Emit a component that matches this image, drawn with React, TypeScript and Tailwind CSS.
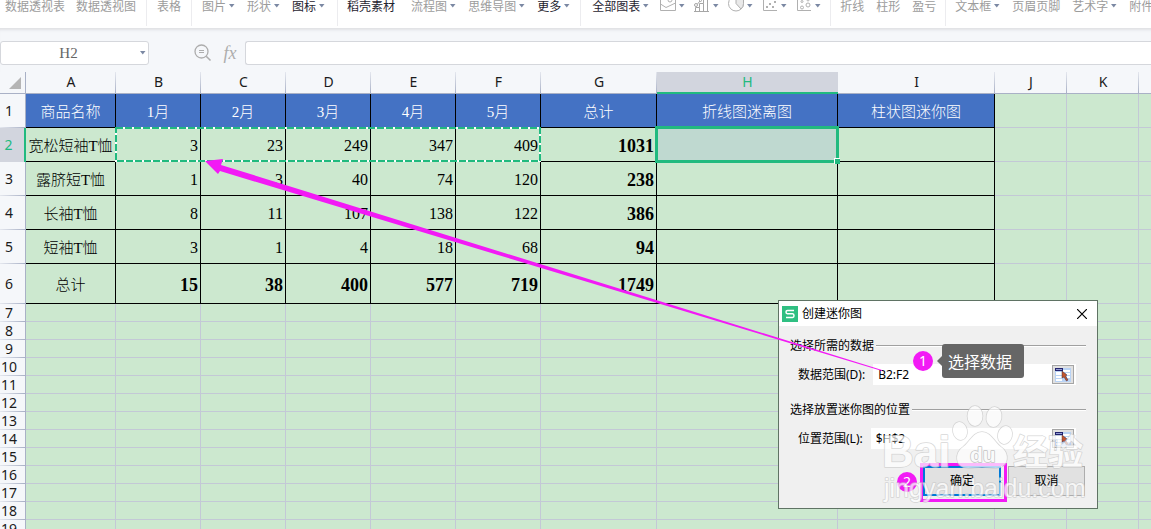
import React from 'react';

type RibbonEntry = {
    label?: string;
    icon?: React.ReactNode;
    menu?: boolean;
    active?: boolean;
    className?: string;
};

type RibbonGroupProps = {
    entries: RibbonEntry[];
    className: string;
};

const CaretIcon: React.FC = () => (
    <svg width="6" height="4" viewBox="0 0 6 4" className="flex-shrink-0" aria-hidden="true">
        <path d="M0 0H5.500L2.750 3.500Z" fill="#7b88a3" />
    </svg>
);

const AreaChartIcon: React.FC = () => (
    <svg width="16" height="12" viewBox="0 0 16 12" fill="none" stroke="#b0b0b0" aria-hidden="true">
        <path d="M.5 0V10.500H15.500V0" />
        <path d="M.5 4L6 7.500L15.500 3M8 0A2 2 0 0 0 12 0" />
    </svg>
);

const ComboChartIcon: React.FC = () => (
    <svg width="16" height="12" viewBox="0 0 16 12" fill="none" stroke="#a6a6a6" aria-hidden="true">
        <path d="M0 11.500H15M1.500 11V7.500H5.500V11M5.500 7.500V3.500H9.500V11M9.500 3.500V0M13.500 0V11" />
        <circle cx="2" cy="5" r="1.500" />
        <path d="M3.500 4L6 1" />
        <circle cx="6.500" cy=".5" r="1" />
    </svg>
);

const PieChartIcon: React.FC = () => (
    <svg width="16" height="12" viewBox="0 0 16 12" fill="none" stroke="#b0b0b0" aria-hidden="true">
        <circle cx="8" cy="3.500" r="7.500" />
        <path d="M8 -4V3.500L13 9A7.500 7.500 0 0 0 15.500 3.500V-4Z" fill="#e9e9e9" />
    </svg>
);

const ScatterIcon: React.FC = () => (
    <svg width="16" height="12" viewBox="0 0 16 12" fill="none" aria-hidden="true">
        <path d="M1.500 0V10.500H15" stroke="#b0b0b0" />
        <path d="M4 6h2v2H4zM7 3h2v2H7zM10 6h2v2h-2zM12 1h2v2h-2z" fill="#b0b0b0" />
    </svg>
);

const BubbleIcon: React.FC = () => (
    <svg width="16" height="12" viewBox="0 0 16 12" fill="none" stroke="#b0b0b0" aria-hidden="true">
        <path d="M1.500 0V10.500H15" />
        <circle cx="6" cy="7.500" r="1.500" />
        <circle cx="12" cy="5" r="2" />
        <circle cx="6" cy="1.500" r="1" />
        <circle cx="12" cy="0" r="1" />
    </svg>
);

const RibbonGroup: React.FC<RibbonGroupProps> = ({ entries, className }) => (
    <div className={`flex h-[26px] flex-shrink-0 items-start border-r border-[#ececef] ${className}`}>
        {entries.map((entry, index) => (
            <button
                key={entry.label ?? index}
                className={`flex items-center gap-[3px] whitespace-nowrap leading-3 ${entry.active ? 'text-[#1f2430]' : 'text-[#9c9c9c]'} ${entry.className ?? ''}`}
            >
                {entry.label ?? entry.icon}
                {entry.menu && <CaretIcon />}
            </button>
        ))}
    </div>
);

const ribbonGroups: RibbonGroupProps[] = [
    { className: 'gap-[11px] pl-[5px] pr-2.5', entries: [{ label: '数据透视表' }, { label: '数据透视图' }] },
    { className: 'px-2.5', entries: [{ label: '表格' }] },
    {
        className: 'gap-3 pl-2.5 pr-3',
        entries: [{ label: '图片', menu: true }, { label: '形状', menu: true }, { label: '图标', menu: true, active: true }],
    },
    {
        className: 'gap-3 pl-[9px] pr-2.5',
        entries: [
            { label: '稻壳素材', active: true, className: 'mr-1' },
            { label: '流程图', menu: true },
            { label: '思维导图', menu: true },
            { label: '更多', menu: true, active: true },
        ],
    },
    {
        className: 'gap-[9px] pl-[11px] pr-[9px]',
        entries: [
            { label: '全部图表', menu: true, active: true, className: 'mr-0.5' },
            { icon: <AreaChartIcon />, menu: true },
            { icon: <ComboChartIcon />, menu: true },
            { icon: <PieChartIcon />, menu: true },
            { icon: <ScatterIcon />, menu: true },
            { icon: <BubbleIcon />, menu: true },
        ],
    },
    { className: 'gap-3 px-[9px]', entries: [{ label: '折线' }, { label: '柱形' }, { label: '盈亏' }] },
    {
        className: 'gap-3 pl-[9px]',
        entries: [{ label: '文本框', menu: true }, { label: '页眉页脚' }, { label: '艺术字', menu: true }, { label: '附件' }],
    },
];

const FormulaBar: React.FC = () => (
    <div className="flex h-11 flex-shrink-0 items-center border-t border-[#e2e3e6] pt-1 shadow-[inset_0_3px_3px_-2px_#dfe0e4]">
        <div className="flex h-6 w-[149px] items-center rounded-[3px] border border-[#d5d7dc] bg-white pr-0.5">
            <input
                aria-label="名称框"
                defaultValue="H2"
                className="w-full min-w-0 bg-transparent pr-1 text-center font-['Liberation_Serif',serif] text-[15px] leading-5 text-[#666] outline-none"
            />
            <CaretIcon />
        </div>
        <button aria-label="查找" className="ml-[45px]">
            <svg width="18" height="18" viewBox="0 0 18 18" fill="none" stroke="#adadad" aria-hidden="true">
                <circle cx="7.500" cy="7.500" r="6.500" strokeWidth="1.300" />
                <path d="M5 6.500H10M5 8.500H10" />
                <path d="M12.200 12.200L16.500 16.500" strokeWidth="1.600" />
            </svg>
        </button>
        <button aria-label="插入函数" className="ml-2.5 w-4 font-['Liberation_Serif',serif] text-lg leading-5 italic text-[#adadad]">
            fx
        </button>
        <input aria-label="编辑栏" className="ml-[7px] h-6 min-w-0 flex-1 rounded-l-[3px] border border-r-0 border-[#d5d7dc] bg-white px-2 outline-none" />
    </div>
);

const columns = ['A', 'B', 'C', 'D', 'E', 'F', 'G', 'H', 'I', 'J', 'K', 'L'];
const lastDataColumn = 8;

const rows: string[][] = [
    ['商品名称', '1月', '2月', '3月', '4月', '5月', '总计', '折线图迷离图', '柱状图迷你图'],
    ['宽松短袖T恤', '3', '23', '249', '347', '409', '1031', '', ''],
    ['露脐短T恤', '1', '3', '40', '74', '120', '238', '', ''],
    ['长袖T恤', '8', '11', '107', '138', '122', '386', '', ''],
    ['短袖T恤', '3', '1', '4', '18', '68', '94', '', ''],
    ['总计', '15', '38', '400', '577', '719', '1749', '', ''],
];
const emptyRows = Array.from({ length: 13 }, (_, i) => i + 7);

const getCellClass = (row: number, col: number) => {
    if (col > lastDataColumn) return 'border-[#c3c8d6]';
    if (row === 0) return 'border-black bg-[#4472c4] text-center text-[15px] font-light text-white';
    if (col === 0) return 'border-black text-center text-[15px] font-light';
    if (col === 6 || row === 5) return 'border-black pr-0.5 text-right text-lg font-bold';
    return 'border-black pr-0.5 text-right text-base';
};

const getRowHeight = (row: number) => (row === 5 ? 'h-10' : 'h-[34px]');

const RowHeader: React.FC<{ row: number }> = ({ row }) => (
    <th
        scope="row"
        className={`bg-no-repeat pt-0 pr-[7px] pb-px pl-0 text-center font-['Noto_Sans',sans-serif] text-sm leading-4 font-normal ${row === 2
            ? 'border-r-2 border-[#21ba7f] bg-[#d2d5de] text-[#21ba7f]'
            : 'border-r border-[#a9b1c6] bg-[#f5f7fa] bg-[linear-gradient(to_right,#e4e7ee,#a9b1c6)] bg-size-[100%_1px] bg-bottom text-[#1b1b1b]'}`}
    >
        {row}
    </th>
);

// Dashed outline around the copied range B2:F2
const RangeOutline: React.FC = () => (
    <svg width="427" height="36" className="pointer-events-none absolute -top-px -left-px z-10 max-w-none" fill="none" strokeWidth="2" aria-hidden="true">
        <rect x="1" y="1" width="424" height="33" stroke="#fff" />
        <rect x="1" y="1" width="424" height="33" stroke="#21ba7f" strokeDasharray="7 2" />
    </svg>
);

const ActiveCell: React.FC = () => (
    <div className="absolute -inset-0.5 z-10 border-3 border-[#21ba7f] bg-[#bfd9d0]">
        <span className="absolute -right-1 -bottom-1 h-[6px] w-[6px] border-t border-l border-white bg-[#21ba7f]" />
    </div>
);

const Sheet: React.FC = () => (
    <table className="w-[1211px] flex-shrink-0 table-fixed border-separate border-spacing-0 bg-[#cce8cf] font-['Liberation_Serif','Noto_Sans_CJK_SC',serif] text-black">
        <colgroup>
            <col className="w-[26px]" />
            <col className="w-[90px]" />
            <col className="w-[85px]" />
            <col className="w-[85px]" />
            <col className="w-[85px]" />
            <col className="w-[85px]" />
            <col className="w-[85px]" />
            <col className="w-[116px]" />
            <col className="w-[181px]" />
            <col className="w-[157px]" />
            <col className="w-[72px]" />
            <col className="w-[72px]" />
            <col className="w-[72px]" />
        </colgroup>
        <thead>
            <tr className="h-[22px]">
                <td className="border-r border-b border-[#a9b1c6] bg-[#f5f7fa] p-0">
                    <svg width="12" height="12" viewBox="0 0 12 12" className="ml-[9px]" aria-hidden="true">
                        <path d="M12 0V12H0Z" fill="#b5b5b5" />
                    </svg>
                </td>
                {columns.map((name) => (
                    <th
                        key={name}
                        scope="col"
                        className={`bg-no-repeat px-0 pt-0 pb-px font-['Noto_Sans',sans-serif] text-sm leading-5 font-normal ${name === 'H'
                            ? 'border-b-2 border-[#21ba7f] bg-[#d2d5de] leading-[19px] text-[#21ba7f]'
                            : 'border-b border-[#a9b1c6] bg-[#f5f7fa] bg-[linear-gradient(to_bottom,#e4e7ee,#a9b1c6)] bg-size-[1px_100%] bg-right text-[#1b1b1b]'}`}
                    >
                        {name}
                    </th>
                ))}
            </tr>
        </thead>
        <tbody>
            {rows.map((cells, row) => (
                <tr key={row} className={getRowHeight(row)}>
                    <RowHeader row={row + 1} />
                    {columns.map((name, col) => (
                        <td key={name} className={`relative border-r border-b px-0 pt-0.5 pb-0 leading-5 whitespace-nowrap ${getCellClass(row, col)}`}>
                            {cells[col]}
                            {row === 1 && name === 'B' && <RangeOutline />}
                            {row === 1 && name === 'H' && <ActiveCell />}
                        </td>
                    ))}
                </tr>
            ))}
            {emptyRows.map((row) => (
                <tr key={row} className="h-[18px]">
                    <RowHeader row={row} />
                    {columns.map((name) => (
                        <td key={name} className="border-r border-b border-[#c3c8d6] p-0" />
                    ))}
                </tr>
            ))}
        </tbody>
    </table>
);

const PickerButton: React.FC<{ label: string }> = ({ label }) => (
    <button aria-label={label} className="flex h-[19px] w-[22px] items-center justify-center border border-[#a5a5a5] bg-[#e1e1e1]">
        <svg width="16" height="14" viewBox="0 0 16 14" aria-hidden="true">
            <path d="M0 0H16V14H0Z" fill="#b9d3f5" />
            <path d="M1 4H7V7H1ZM1 8H7V10H1ZM1 11H7V13H1ZM8 2H15V4H8ZM11 5H15V7H11ZM12 8H15V10H12Z" fill="#fff" />
            <path d="M0 0H8V3H0Z" fill="#23236e" />
            <path d="M1 1H7V2H1Z" fill="#8f9bd0" />
            <path d="M7 3L12 7L10.500 8L13 12L11.500 13L9 9L7 10Z" fill="#c4552d" stroke="#3c2a3c" strokeWidth=".5" />
        </svg>
    </button>
);

const Legend: React.FC<{ children: React.ReactNode }> = ({ children }) => (
    <div className="flex items-center gap-0.5 leading-4">
        <span className="whitespace-nowrap">{children}</span>
        <span className="h-0.5 flex-1 border-t border-[#a0a0a0] bg-white" />
    </div>
);

const RangeField: React.FC<{ id: string; label: string; value: string }> = ({ id, label, value }) => (
    <div className="flex h-[21px] items-center gap-2 pr-2.5 pl-2">
        <label htmlFor={id} className="whitespace-nowrap">{label}</label>
        <div className="flex h-full flex-1 items-center bg-white pr-0.5">
            <input id={id} defaultValue={value} className="min-w-0 flex-1 bg-transparent pl-[5px] outline-none" />
            <PickerButton label={`选取${label}`} />
        </div>
    </div>
);

const Watermark: React.FC = () => (
    <svg width="212" height="106" viewBox="0 0 212 106" className="pointer-events-none absolute right-[5px] bottom-0 opacity-70" aria-hidden="true">
        <g fill="#fff" stroke="#c8c8c8" strokeWidth="1.500" strokeLinejoin="round">
            <text x="2" y="65" fontSize="44" fontWeight="700" fontFamily="Liberation Sans, sans-serif" paintOrder="stroke">Bai</text>
            <g paintOrder="stroke">
                <ellipse cx="80" cy="29" rx="7" ry="9" transform="rotate(-12 80 29)" />
                <ellipse cx="95" cy="14" rx="7.500" ry="10" />
                <ellipse cx="114" cy="15" rx="7.500" ry="10" transform="rotate(10 114 15)" />
                <ellipse cx="125" cy="33" rx="7" ry="9" transform="rotate(14 125 33)" />
                <path d="M102 30C93 30 90 40 83 45C74 51 75 66 88 66C93 66 97 65 102 65S111 66 116 66C129 66 130 51 121 45C114 40 111 30 102 30Z" />
            </g>
            <text x="90" y="60" fontSize="21" fontWeight="700" stroke="#b0b0b0" fontFamily="Liberation Sans, sans-serif" paintOrder="stroke">du</text>
            <text x="133" y="63" fontSize="35" fontWeight="700" fontFamily="Noto Sans CJK SC, sans-serif" paintOrder="stroke">经验</text>
            <text x="4" y="95" fontSize="25" fontFamily="Liberation Sans, sans-serif" paintOrder="stroke">jingyan.baidu.com</text>
        </g>
    </svg>
);

const StepBadge: React.FC<{ step: number; className: string }> = ({ step, className }) => (
    <span className={`absolute flex h-5 w-5 items-center justify-center rounded-full bg-[#f21af5] font-['Noto_Sans',sans-serif] text-sm text-white ${className}`}>
        {step}
    </span>
);

const SparklineDialog: React.FC = () => (
    <div
        role="dialog"
        aria-label="创建迷你图"
        className="absolute top-[300px] left-[778px] z-20 w-80 border border-[#5f7364] bg-[#f0f0f0] font-['Noto_Sans','Noto_Sans_CJK_SC',sans-serif] text-xs text-black"
    >
        <div className="flex h-[25px] items-center bg-white pr-2.5 pl-[3px]">
            <svg width="16" height="16" viewBox="0 0 16 16" aria-hidden="true">
                <rect width="16" height="16" fill="#2fbf82" />
                <path d="M12 4.500H5.500Q4 4.500 4 6T5.500 7.800H10.500Q12 8 12 9.700T10.500 11.500H4" fill="none" stroke="#fff" strokeWidth="1.500" />
            </svg>
            <span className="ml-1 flex-1">创建迷你图</span>
            <button aria-label="关闭">
                <svg width="10" height="10" viewBox="0 0 10 10" stroke="#000" strokeWidth="1.200" aria-hidden="true">
                    <path d="M0 0L10 10M10 0L0 10" />
                </svg>
            </button>
        </div>
        <div className="px-[11px] pt-3 pb-3">
            <Legend>选择所需的数据</Legend>
            <div className="mt-2.5">
                <RangeField id="data-range" label="数据范围(D):" value="B2:F2" />
            </div>
            <div className="mt-[17px]">
                <Legend>选择放置迷你图的位置</Legend>
            </div>
            <div className="mt-2.5">
                <RangeField id="target-range" label="位置范围(L):" value="$H$2" />
            </div>
            <div className="mt-[17px] flex justify-end gap-[7px] pr-px">
                <div className="relative">
                    <button className="h-[30px] w-[78px] border-2 border-[#0078d7] bg-[#e1e1e1]">
                        <span className="relative z-10">确定</span>
                    </button>
                    <span className="pointer-events-none absolute -top-[3px] -right-1.5 -bottom-1.5 -left-[3px] border-3 border-[#f21af5]" />
                </div>
                <button className="h-[30px] w-[77px] border border-[#adadad] bg-[#e1e1e1]">
                    <span className="relative z-10">取消</span>
                </button>
            </div>
        </div>
        <StepBadge step={2} className="top-[171px] left-[118px]" />
        <Watermark />
    </div>
);

const Callouts: React.FC = () => (
    <>
        <svg width="1151" height="529" className="pointer-events-none absolute top-0 left-0 z-30 max-w-none" aria-hidden="true">
            <path d="M205 161L223 159L221 165L882 370V371L220 171L218 174Z" fill="#f21af5" />
        </svg>
        <StepBadge step={1} className="top-[351px] left-[913px] z-30" />
        <div className="absolute top-[344px] left-[937px] z-30 flex items-center">
            <svg width="5" height="10" viewBox="0 0 5 10" aria-hidden="true">
                <path d="M5 0V10L0 5Z" fill="#666" />
            </svg>
            <span className="rounded-[3px] bg-[#666] py-[5px] pr-3 pl-1.5 font-['Noto_Sans_CJK_SC',sans-serif] text-base text-white">选择数据</span>
        </div>
    </>
);

const App: React.FC = () => (
    <div className="relative flex h-screen flex-col overflow-hidden bg-[#f5f7fa] font-['Noto_Sans_CJK_SC',sans-serif] text-xs">
        <div className="flex h-7 flex-shrink-0 overflow-hidden bg-white">
            {ribbonGroups.map((group, index) => (
                <RibbonGroup key={index} {...group} />
            ))}
        </div>
        <FormulaBar />
        <Sheet />
        <SparklineDialog />
        <Callouts />
    </div>
);

export default App;
